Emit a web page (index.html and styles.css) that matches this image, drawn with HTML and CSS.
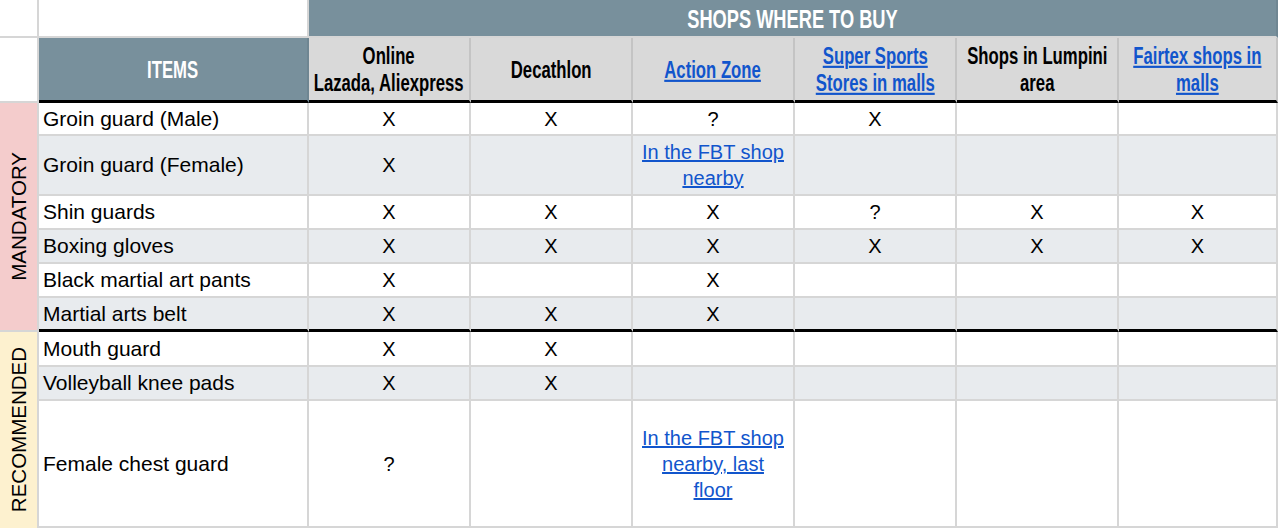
FILE: index.html
```html
<!DOCTYPE html>
<html>
<head>
<meta charset="utf-8">
<link rel="stylesheet" href="styles.css">
</head>
<body>
<div class="sheet">
  <div class="c white"></div>
  <div class="c white"></div>
  <div class="c band span6"><span class="hd big">SHOPS WHERE TO BUY</span></div>

  <div class="c white"></div>
  <div class="c band thick"><span class="hd">ITEMS</span></div>
  <div class="c colhead thick"><span class="hd">Online<br>Lazada, Aliexpress</span></div>
  <div class="c colhead thick"><span class="hd">Decathlon</span></div>
  <div class="c colhead thick"><span class="hd"><a href="#">Action Zone</a></span></div>
  <div class="c colhead thick"><span class="hd"><a href="#">Super Sports<br>Stores in malls</a></span></div>
  <div class="c colhead thick"><span class="hd">Shops in Lumpini<br>area</span></div>
  <div class="c colhead thick"><span class="hd"><a href="#">Fairtex shops in<br>malls</a></span></div>

  <div class="c label pink rows6"><span class="vert">MANDATORY</span></div>
  <div class="c item">Groin guard (Male)</div>
  <div class="c mk">X</div><div class="c mk">X</div><div class="c mk">?</div><div class="c mk">X</div><div class="c mk"></div><div class="c mk"></div>

  <div class="c item alt">Groin guard (Female)</div>
  <div class="c mk alt">X</div><div class="c mk alt"></div><div class="c mk alt"><a href="#">In the FBT shop<br>nearby</a></div><div class="c mk alt"></div><div class="c mk alt"></div><div class="c mk alt"></div>

  <div class="c item">Shin guards</div>
  <div class="c mk">X</div><div class="c mk">X</div><div class="c mk">X</div><div class="c mk">?</div><div class="c mk">X</div><div class="c mk">X</div>

  <div class="c item alt">Boxing gloves</div>
  <div class="c mk alt">X</div><div class="c mk alt">X</div><div class="c mk alt">X</div><div class="c mk alt">X</div><div class="c mk alt">X</div><div class="c mk alt">X</div>

  <div class="c item">Black martial art pants</div>
  <div class="c mk">X</div><div class="c mk"></div><div class="c mk">X</div><div class="c mk"></div><div class="c mk"></div><div class="c mk"></div>

  <div class="c item alt thick">Martial arts belt</div>
  <div class="c mk alt thick">X</div><div class="c mk alt thick">X</div><div class="c mk alt thick">X</div><div class="c mk alt thick"></div><div class="c mk alt thick"></div><div class="c mk alt thick"></div>

  <div class="c label yellow rows3"><span class="vert">RECOMMENDED</span></div>
  <div class="c item">Mouth guard</div>
  <div class="c mk">X</div><div class="c mk">X</div><div class="c mk"></div><div class="c mk"></div><div class="c mk"></div><div class="c mk"></div>

  <div class="c item alt">Volleyball knee pads</div>
  <div class="c mk alt">X</div><div class="c mk alt">X</div><div class="c mk alt"></div><div class="c mk alt"></div><div class="c mk alt"></div><div class="c mk alt"></div>

  <div class="c item">Female chest guard</div>
  <div class="c mk">?</div><div class="c mk"></div><div class="c mk"><a href="#">In the FBT shop<br>nearby, last<br>floor</a></div><div class="c mk"></div><div class="c mk"></div><div class="c mk"></div>
</div>
</body>
</html>
```

FILE: styles.css
```css
html, body {
  margin: 0;
  padding: 0;
  background: #ffffff;
  overflow: hidden;
}

.sheet {
  width: 1278px;
  height: 528px;
  display: grid;
  grid-template-columns: 39px 270px 162px 162px 162px 162px 162px 1fr;
  grid-template-rows: 38px 65px 33px 60px 34px 34px 34px 34px 35px 34px 127px;
  font-family: "Liberation Sans", Arial, sans-serif;
  font-size: 21px;
  color: #000000;
  overflow: hidden;
}

.c {
  box-sizing: border-box;
  border-right: 2px solid #d6d6d6;
  border-bottom: 2px solid #d6d6d6;
  display: flex;
  align-items: center;
  min-width: 0;
  overflow: hidden;
  background: #ffffff;
}

.white { background: #ffffff; }

.span6 { grid-column: span 6; }
.rows6 { grid-row: span 6; }
.rows3 { grid-row: span 3; }

.band {
  background: #78909c;
  color: #ffffff;
  justify-content: center;
  border-right-color: #6f8692;
  border-bottom-color: #d6d6d6;
}

.colhead {
  background: #d9d9d9;
  justify-content: center;
  text-align: center;
  border-right-color: #c4c4c4;
}

.hd {
  display: inline-block;
  flex: none;
  font-family: "Liberation Sans", Arial, sans-serif;
  font-weight: bold;
  font-size: 22px;
  line-height: 25px;
  white-space: nowrap;
  transform: scale(0.76, 1.08);
}

.hd.big { font-size: 24px; }

.thick { border-bottom: 3px solid #000000; }

.item {
  padding-left: 4px;
  white-space: nowrap;
}

.mk {
  justify-content: center;
  text-align: center;
  line-height: 26px;
  font-size: 20px;
}

.alt { background: #e8ebee; }

.label {
  justify-content: center;
  border-bottom: none;
}
.pink { background: #f4cccc; border-bottom: 2px solid #d6d6d6; }
.yellow { background: #fdf1cf; }

.vert {
  writing-mode: vertical-rl;
  transform: rotate(180deg);
  font-size: 20.5px;
  white-space: nowrap;
}

a {
  color: #1155cc;
  text-decoration: underline;
}
```
